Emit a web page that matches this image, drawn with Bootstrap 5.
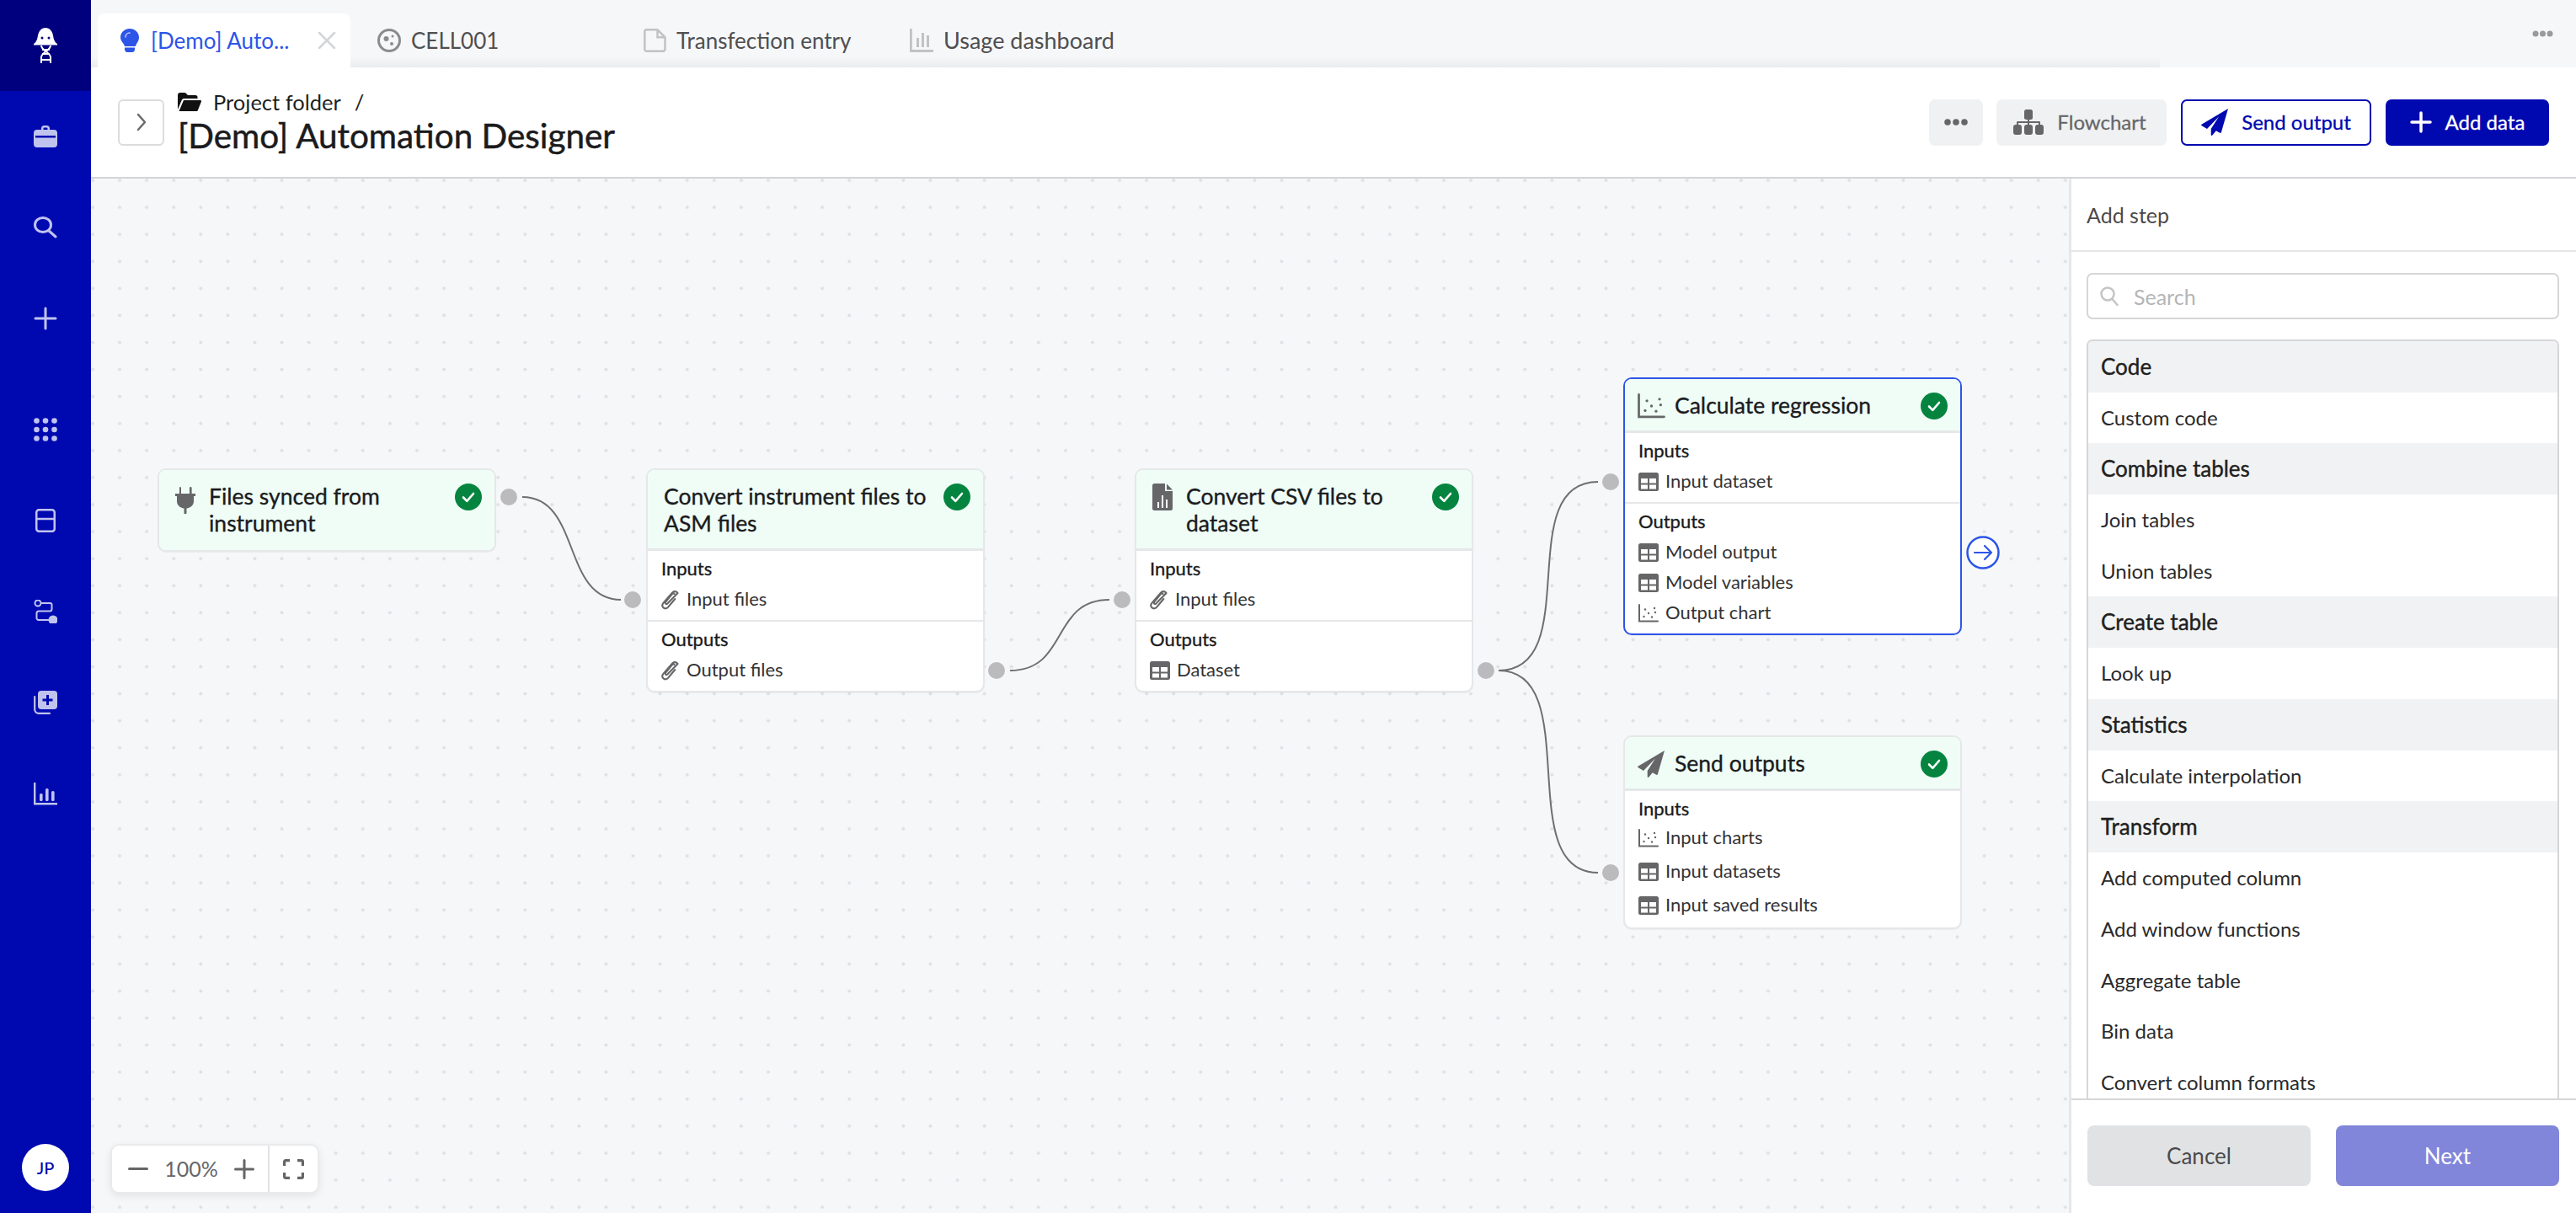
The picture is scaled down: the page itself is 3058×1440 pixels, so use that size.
<!DOCTYPE html>
<html lang="en">
<head>
    <meta charset="UTF-8">
    <meta name="viewport" content="width=device-width, initial-scale=1.0">
    <title>[Demo] Automation Designer</title>
    <link rel="stylesheet" href="https://cdn.jsdelivr.net/npm/bootstrap@5.3.0/dist/css/bootstrap.min.css">
    <style>
        body { font-family: "Lato", "Liberation Sans", sans-serif; color: #1f1f21; background: #fff; overflow: hidden; }
        svg { display: block; flex-shrink: 0; }
        .main-col { min-width: 0; }
        .work-row { min-height: 0; }

        /* left rail */
        .rail { width: 108px; background: #0009b0; color: #c0c3ee; }
        .rail-logo { height: 108px; background: #00007f; color: #fff; }
        .rail-item { height: 108px; color: #c0c3ee; }
        .rail-gap { margin-top: 24px; }
        .rail-avatar { width: 56px; height: 56px; margin-bottom: 26px; background: #fff; color: #0009b0; font-size: 20px; font-weight: 500; }

        /* tab strip */
        .strip { height: 80px; background: #f6f7f9; }
        .strip-tabs { width: 2456px; background: linear-gradient(to bottom, #f6f7f9 85%, #e9ebed 100%); }
        .tab-item { height: 64px; margin-top: 16px; color: #4f4f50; font-size: 26px; white-space: nowrap; }
        .tab-item > svg { margin-right: 12px; }
        .tab-active { width: 300px; margin-left: 8px; padding-left: 27px; background: #fff; color: #2c55e8; border-radius: 8px 8px 0 0; }
        .tab-active > svg:first-child { margin-right: 14px; }
        .tab-cell { margin-left: 32px; width: 316px; }
        .tab-doc { width: 316px; }
        .tab-wide { font-size: 27px; }
        .tab-active > .tab-close { margin: 0 0 0 34px; color: #d4d5d7; }
        .strip-more { margin-right: 27px; color: #9a9a9c; }

        /* page header */
        .page-head { height: 132px; padding: 0 32px; border-bottom: 2px solid #d3d4d6; background: #fff; }
        .toggle-btn { width: 55px; height: 55px; padding: 0; border: 2px solid #dcdcdd; border-radius: 6px; background: #fff; color: #6a6a6c; }
        .crumb { font-size: 25.5px; line-height: 30px; color: #1f1f21; }
        .crumb svg { margin-right: 14px; }
        .page-title { font-size: 40.4px; line-height: 46px; font-weight: 400; -webkit-text-stroke: .5px; margin: 2px 0 0; color: #1b1b1d; }
        .head-btn { height: 55px; padding: 0; font-size: 24px; border-radius: 7px; border-width: 2px; -webkit-text-stroke: .3px; }
        .head-more { width: 64px; }
        .head-flow { width: 202px; margin-left: 16px; padding-right: 4px; }
        .head-send { width: 226px; margin-left: 17px; }
        .head-add { width: 194px; margin-left: 17px; }
        .btn-soft { background: #f0f1f2; border-color: #f0f1f2; color: #666668; }
        .btn-line { background: #fff; border-color: #0009b0; color: #0009b0; }
        .btn-solid { background: #0009b0; border-color: #0009b0; color: #fff; }

        /* canvas */
        .canvas-area { background: #f6f7f9; }
        .canvas-layer { position: absolute; inset: 0; width: 100%; height: 100%; }
        .flow-node { position: absolute; width: 402px; border: 2px solid #e5e7e9; border-radius: 10px; background: #fff; overflow: hidden; box-shadow: 0 1px 1px rgba(0,0,0,.05); }
        .flow-node.is-selected { border-color: #2c55e8; }
        .node-a { left: 79px; top: 344px; }
        .node-b { left: 659px; top: 344px; }
        .node-c { left: 1239px; top: 344px; }
        .node-d { left: 1819px; top: 236px; }
        .node-e { left: 1819px; top: 661px; }
        .node-top { padding: 16px 16px 13px 19px; background: #effdf6; border-bottom: 3px solid #e5e7e9; font-size: 26.5px; line-height: 32px; font-weight: 400; -webkit-text-stroke: .35px; color: #1b1b1d; }
        .node-a .node-top { padding-bottom: 15px; border-bottom: 0; }
        .node-d .node-top, .node-e .node-top { padding-left: 15px; }
        .node-top .node-name { flex: 1; margin: -1px 0 1px; }
        .node-icon { color: #666668; margin-right: 16px; }
        .node-d .node-icon { margin-right: 11px; }
        .node-e .node-icon { margin-right: 12px; }
        .node-check { margin-left: 8px; margin-right: -1px; }
        .node-part { padding: 8px 16px 6px; border-bottom: 2px solid #e5e7e9; }
        .node-part:last-child { border-bottom: 0; }
        .part-name { font-size: 22px; line-height: 26px; font-weight: 400; -webkit-text-stroke: .35px; margin-bottom: 6px; color: #1b1b1d; }
        .part-row { height: 36px; font-size: 22px; color: #333335; gap: 8px; }
        .part-row span { margin-top: -4px; }
        .part-row svg { color: #666668; }
        .part-row .clip-icon { margin-right: 1px; }
        .node-e .part-name { margin-bottom: 2px; }
        .node-e .part-row { height: 40px; }

        .zoom-bar { position: absolute; left: 23px; top: 1146px; width: 248px; height: 59px; background: #fff; border: 2px solid #e9eaec; border-radius: 10px; box-shadow: 0 3px 10px rgba(0,0,0,.08); color: #666668; font-size: 25px; }
        .zoom-main { width: 187px; padding: 0 16px 0 19px; border-right: 2px solid #e2e3e5; }
        .zoom-fit { flex: 1; }

        /* add step panel */
        .step-panel { width: 602px; border-left: 3px solid #e6e7ea; background: #fff; }
        .step-head { height: 87px; padding: 2px 18px 0; border-bottom: 2px solid #e6e6e8; font-size: 25px; color: #4a4a4c; }
        .step-search { margin: 25px 20px 24px 18px; }
        .step-search .form-control { height: 55px; padding-left: 54px; border: 2px solid #d6d6d8; border-radius: 7px; font-size: 25px; }
        .step-search .form-control::placeholder { color: #b5b5b7; }
        .step-search svg { position: absolute; left: 16px; top: 16px; color: #c4c4c6; }
        .step-list { margin: 0 20px 0 18px; border: 2px solid #d6d6d8; border-bottom: 0; border-radius: 7px 7px 0 0; overflow: hidden; min-height: 0; }
        .step-list .list-group-item { height: 60.7px; padding: 0 15px; display: flex; align-items: center; border: 0; border-radius: 0; font-size: 24px; color: #2a2a2c; flex-shrink: 0; }
        .step-list .step-group { background: #f1f2f3; font-size: 26px; -webkit-text-stroke: .4px; color: #1f1f21; }
        .step-foot { height: 136px; padding: 30px 20px 32px 19px; border-top: 2px solid #d6d6d8; gap: 30px; }
        .step-foot .btn { flex: 1; height: 72px; border: 0; border-radius: 8px; font-size: 26px; }
        .btn-cancel { background: #e1e2e4; color: #4a4a4c; }
        .btn-next, .btn-next:disabled { background: #8286da; color: #fff; opacity: 1; }
    </style>
</head>
<body>

    <svg width="0" height="0" class="position-absolute">
        <defs>
            <symbol id="i-table" viewBox="0 0 24 22"><rect width="24" height="22" rx="2.5" fill="currentColor"/><rect x="3" y="7" width="8" height="5.5" fill="#fff"/><rect x="13" y="7" width="8" height="5.5" fill="#fff"/><rect x="3" y="14.5" width="8" height="5" fill="#fff"/><rect x="13" y="14.5" width="8" height="5" fill="#fff"/></symbol>
            <symbol id="i-clip" viewBox="0 0 22 24"><path d="M20 3c-2-2-4.600-1.600-6.400.4L2.900 15.500c-1.800 2.200-2 4.700-.4 6.300 1.800 1.800 4.300 1.200 6.100-.8l8.500-10M16.200 4.600c-.9-.9-2-.4-3 .8L6 14c-1 1.400-1 2.400-.4 3 .8.600 1.800.2 2.800-1L19 5.200C20.400 3.500 21 4 20 3" fill="none" stroke="currentColor" stroke-width="2.200" stroke-linecap="round" stroke-linejoin="round"/></symbol>
            <symbol id="i-scatter" viewBox="0 0 24 22"><path d="M1 1v19.400h22" fill="none" stroke="currentColor" stroke-width="2" stroke-linecap="round"/><g fill="currentColor"><circle cx="6.500" cy="15" r="1.200"/><circle cx="8" cy="6.500" r="1.200"/><circle cx="12" cy="11" r="1.200"/><circle cx="16" cy="15.500" r="1.200"/><circle cx="19" cy="5" r="1.200"/><circle cx="20" cy="10" r="1.200"/></g></symbol>
            <symbol id="i-plane" viewBox="0 0 32 32"><path d="M32 0 .8 18.500c-.9.600-.9 1.300 0 1.800L7 24 21 9.500 11.700 24v7c0 1 1 1.300 1.700.6l4.300-5.300 4.600 2.500c.8.400 1.400 0 1.600-.8z" fill="currentColor"/></symbol>
            <symbol id="i-plug" viewBox="0 0 24 32"><path d="M5.500 0a1.300 1.300 0 0 1 1.500 1.300V8H5V1zM17 1.300a1.300 1.300 0 0 1 2.600 0V8H17z M0 8h24v3h-2v6c0 4.500-3.500 8-8.500 8.500V31a1.500 1.500 0 0 1-3 0v-5.500C5.500 25 2 21.500 2 17v-6H0z" fill="currentColor"/></symbol>
            <symbol id="i-filechart" viewBox="0 0 24 32"><path d="M2.500 0H15v9h9v20.500a2.500 2.500 0 0 1-2.500 2.500h-19A2.500 2.500 0 0 1 0 29.500v-27A2.500 2.500 0 0 1 2.500 0zM17 .5l7 7h-7z" fill="currentColor"/><g fill="#fff"><rect x="6" y="22" width="2" height="7"/><rect x="11" y="14" width="2" height="15"/><rect x="16" y="19" width="2" height="10"/></g></symbol>
            <symbol id="i-sitemap" viewBox="0 0 36 30"><g fill="currentColor"><rect x="13" y="0" width="10" height="12" rx="2.500"/><rect x="0" y="18" width="10" height="12" rx="3"/><rect x="13" y="18" width="10" height="12" rx="3"/><rect x="26" y="18" width="10" height="12" rx="3"/><path d="M17 11h2v3h12a1 1 0 0 1 1 1v4h-2v-3H19v3h-2v-3H6v3H4v-4a1 1 0 0 1 1-1h12z"/></g></symbol>
            <symbol id="i-check" viewBox="0 0 32 32"><circle cx="16" cy="16" r="16" fill="#05843f"/><path d="M10 16.500l4.300 4.300 7.700-8.800" fill="none" stroke="#fff" stroke-width="2.600" stroke-linecap="round" stroke-linejoin="round"/></symbol>
        </defs>
    </svg>

    <div class="d-flex vh-100">
        <aside class="rail d-flex flex-column align-items-center flex-shrink-0">
            <div class="rail-logo w-100 d-flex align-items-center justify-content-center">
                <svg width="28" height="42" viewBox="0 0 28 42" fill="none"><path d="M14 0c5 0 8 4 9 9 .6 4 1.600 8 5 10v1.500H0V19c3.400-2 4.400-6 5-10 1-5 4-9 9-9z" fill="#fff"/><circle cx="10" cy="12" r="1.500" fill="#00007f"/><circle cx="18" cy="12" r="1.500" fill="#00007f"/><path d="M20 21c0 6-11 8-11 14 0 3 0 5 0 7M9 21c0 6 11 8 11 14 0 3 0 5 0 7M10 26h9M10 31h9M10 38h9" stroke="#fff" stroke-width="2"/></svg>
            </div>
            <a class="rail-item w-100 d-flex align-items-center justify-content-center" href="#"><svg width="28" height="26" viewBox="0 0 28 26"><path d="M9 5V3.500A3.500 3.500 0 0 1 12.500 0h3A3.500 3.500 0 0 1 19 3.500V5h5a4 4 0 0 1 4 4v13a4 4 0 0 1-4 4H4a4 4 0 0 1-4-4V9a4 4 0 0 1 4-4zm2.500 0h5V3.500a1 1 0 0 0-1-1h-3a1 1 0 0 0-1 1z" fill="currentColor"/><rect x="2" y="12" width="24" height="2.500" fill="#0009b0"/></svg></a>
            <a class="rail-item w-100 d-flex align-items-center justify-content-center" href="#"><svg width="28" height="26" viewBox="0 0 28 26" fill="none" stroke="currentColor" stroke-width="3"><ellipse cx="11" cy="10" rx="9.500" ry="8.500"/><path d="M18 17l8 7" stroke-linecap="round"/></svg></a>
            <a class="rail-item w-100 d-flex align-items-center justify-content-center" href="#"><svg width="28" height="28" viewBox="0 0 28 28" stroke="currentColor" stroke-width="3" stroke-linecap="round"><path d="M14 2v24M2 14h24"/></svg></a>
            <a class="rail-item rail-gap w-100 d-flex align-items-center justify-content-center" href="#"><svg width="28" height="28" viewBox="0 0 28 28" fill="currentColor"><circle cx="3.500" cy="3.500" r="3.300"/><circle cx="14" cy="3.500" r="3.300"/><circle cx="24.500" cy="3.500" r="3.300"/><circle cx="3.500" cy="14" r="3.300"/><circle cx="14" cy="14" r="3.300"/><circle cx="24.500" cy="14" r="3.300"/><circle cx="3.500" cy="24.500" r="3.300"/><circle cx="14" cy="24.500" r="3.300"/><circle cx="24.500" cy="24.500" r="3.300"/></svg></a>
            <a class="rail-item w-100 d-flex align-items-center justify-content-center" href="#"><svg width="24" height="28" viewBox="0 0 24 28" fill="none" stroke="currentColor" stroke-width="2.500"><rect x="1.250" y="1.250" width="21.500" height="25.500" rx="3"/><path d="M1 12h22"/></svg></a>
            <a class="rail-item w-100 d-flex align-items-center justify-content-center" href="#"><svg width="28" height="28" viewBox="0 0 28 28" fill="none" stroke="currentColor" stroke-width="2"><circle cx="5" cy="4" r="3.500"/><path d="M8.500 4h11a2 2 0 0 1 2 2v5a2.500 2.500 0 0 1-2.500 2.500H6a2.500 2.500 0 0 0-2.500 2.500v5A2.500 2.500 0 0 0 6 24h12"/><circle cx="23" cy="24" r="4.500" fill="currentColor"/></svg></a>
            <a class="rail-item w-100 d-flex align-items-center justify-content-center" href="#"><svg width="28" height="28" viewBox="0 0 28 28"><rect x="5" y="0" width="23" height="22" rx="4" fill="currentColor"/><path d="M16.500 5v12M10.500 11h12" stroke="#0009b0" stroke-width="3"/><path d="M1.200 7v15a4.800 4.800 0 0 0 4.800 4.800h13" fill="none" stroke="currentColor" stroke-width="2.200" stroke-linecap="round"/></svg></a>
            <a class="rail-item w-100 d-flex align-items-center justify-content-center" href="#"><svg width="28" height="28" viewBox="0 0 28 28" fill="currentColor"><path d="M0 1h2.400v24H28v2.500H0z"/><rect x="7" y="14" width="3.600" height="9" rx="1.500"/><rect x="14" y="8" width="3.600" height="15" rx="1.500"/><rect x="21" y="11" width="3.600" height="12" rx="1.500"/></svg></a>
            <div class="rail-avatar mt-auto rounded-circle d-flex align-items-center justify-content-center">JP</div>
        </aside>

        <main class="main-col flex-grow-1 d-flex flex-column">
            <div class="strip d-flex justify-content-between align-items-center flex-shrink-0">
                <div class="strip-tabs d-flex h-100">
                    <div class="tab-item tab-active d-flex align-items-center">
                        <svg width="22" height="28" viewBox="0 0 22 28" fill="currentColor"><path d="M11 0c6 0 11 4.500 11 10.500 0 4.500-3 6.500-4 10.500H5c-1-4-5-6-5-10.500C0 4.500 5 0 11 0z"/><path d="M5 22.500h12v2c0 2-1.500 3.500-3 3.500H8c-1.500 0-3-1.500-3-3.500z"/><path d="M6 10c0-2.800 2-5 5-5" fill="none" stroke="#fff" stroke-width="1.500" stroke-linecap="round" opacity=".7"/></svg>
                        <span>[Demo] Auto...</span>
                        <svg class="tab-close" width="22" height="20" viewBox="0 0 22 20" stroke="currentColor" stroke-width="2.500" stroke-linecap="round"><path d="M2 1l18 18M20 1L2 19"/></svg>
                    </div>
                    <div class="tab-item tab-cell d-flex align-items-center">
                        <svg width="28" height="28" viewBox="0 0 28 28"><circle cx="14" cy="14" r="12.500" fill="none" stroke="#8b8b8d" stroke-width="3"/><circle cx="10.500" cy="12" r="3" fill="#8b8b8d"/><circle cx="17" cy="18" r="2" fill="#8b8b8d"/><circle cx="18" cy="9" r="1.500" fill="#8b8b8d"/></svg>
                        <span>CELL001</span>
                    </div>
                    <div class="tab-item tab-doc d-flex align-items-center">
                        <svg width="27" height="28" viewBox="0 0 27 28" fill="none" stroke="#c2c2c4" stroke-width="2.500"><path d="M3.500 1.300h13l9 9v14a2.500 2.500 0 0 1-2.500 2.500H3.500A2.300 2.300 0 0 1 1.300 24.300v-21A2.300 2.300 0 0 1 3.500 1.300zM16.500 1.300v9h9"/></svg>
                        <span>Transfection entry</span>
                    </div>
                    <div class="tab-item d-flex align-items-center">
                        <svg width="28" height="28" viewBox="0 0 28 28" fill="#c2c2c4"><path d="M0 0h2.800v25H28v3H0z"/><rect x="8" y="11" width="3" height="11"/><rect x="14" y="5" width="3" height="17"/><rect x="20" y="8" width="3" height="14"/></svg>
                        <span class="tab-wide">Usage dashboard</span>
                    </div>
                </div>
                <svg class="strip-more" width="25" height="8" viewBox="0 0 25 8" fill="currentColor"><circle cx="4" cy="4" r="3.500"/><circle cx="12.500" cy="4" r="3.500"/><circle cx="21" cy="4" r="3.500"/></svg>
            </div>

            <header class="page-head d-flex align-items-center flex-shrink-0">
                <button class="toggle-btn btn d-flex align-items-center justify-content-center" type="button"><svg width="12" height="22" viewBox="0 0 12 22" fill="none" stroke="currentColor" stroke-width="2.500" stroke-linecap="round" stroke-linejoin="round"><path d="M2 2l8 9-8 9"/></svg></button>
                <div class="ms-3">
                    <div class="crumb d-flex align-items-center">
                        <svg width="28" height="22" viewBox="0 0 28 22" fill="#111"><path d="M0 3a3 3 0 0 1 3-3h6l3 3h9a2.500 2.500 0 0 1 2.500 2.500V7H7.500a3 3 0 0 0-2.800 2L0 20z"/><path d="M7 9h20c.8 0 1.200.7 1 1.400l-4 10c-.3.900-1 1.600-2 1.600H1.500z"/></svg>
                        <span>Project folder</span><span class="ms-3">/</span>
                    </div>
                    <h1 class="page-title">[Demo] Automation Designer</h1>
                </div>
                <div class="ms-auto d-flex">
                    <button class="btn head-btn head-more btn-soft d-flex align-items-center justify-content-center" type="button"><svg width="28" height="8" viewBox="0 0 28 8" fill="currentColor"><circle cx="4" cy="4" r="3.800"/><circle cx="14" cy="4" r="3.800"/><circle cx="24" cy="4" r="3.800"/></svg></button>
                    <button class="btn head-btn head-flow btn-soft d-flex align-items-center justify-content-center gap-3" type="button"><svg width="36" height="30"><use href="#i-sitemap"/></svg>Flowchart</button>
                    <button class="btn head-btn head-send btn-line d-flex align-items-center justify-content-center gap-3" type="button"><svg width="32" height="32"><use href="#i-plane"/></svg>Send output</button>
                    <button class="btn head-btn head-add btn-solid d-flex align-items-center justify-content-center gap-3" type="button"><svg width="26" height="26" viewBox="0 0 26 26" stroke="currentColor" stroke-width="3.500" stroke-linecap="round"><path d="M13 2v22M2 13h22"/></svg>Add data</button>
                </div>
            </header>

            <div class="work-row d-flex flex-grow-1">
                <section class="canvas-area flex-grow-1 position-relative overflow-hidden">
                    <svg class="canvas-layer">
                        <defs>
                            <pattern id="dot-grid" x="-14" y="-14" width="32.08" height="32.08" patternUnits="userSpaceOnUse"><circle cx="16" cy="16" r="2" fill="#dfe0e3"/></pattern>
                        </defs>
                        <rect width="100%" height="100%" fill="url(#dot-grid)"/>
                        <g fill="none" stroke="#6f6f71" stroke-width="2">
                            <path d="M512 378C582 378 559 500 629 500"/>
                            <path d="M1091 584C1161 584 1139 500 1209 500"/>
                            <path d="M1671 584C1774 584 1686 360 1789 360"/>
                            <path d="M1671 584C1774 584 1686 824 1789 824"/>
                        </g>
                        <g fill="#bbbbbd">
                            <circle cx="496" cy="378" r="10"/>
                            <circle cx="643" cy="500" r="10"/>
                            <circle cx="1075" cy="584" r="10"/>
                            <circle cx="1224" cy="500" r="10"/>
                            <circle cx="1656" cy="584" r="10"/>
                            <circle cx="1804" cy="360" r="10"/>
                            <circle cx="1804" cy="824" r="10"/>
                        </g>
                        <circle cx="2246" cy="444" r="18.500" fill="#fff" stroke="#2c55e8" stroke-width="2.500"/>
                        <path d="M2236 444h20M2248 436l8 8-8 8" fill="none" stroke="#2c55e8" stroke-width="2.200" stroke-linecap="round" stroke-linejoin="round"/>
                    </svg>

                    <div class="flow-node node-a">
                        <div class="node-top d-flex">
                            <svg class="node-icon mt-1" width="24" height="32"><use href="#i-plug"/></svg>
                            <div class="node-name">Files synced from instrument</div>
                            <svg class="node-check" width="32" height="32"><use href="#i-check"/></svg>
                        </div>
                    </div>

                    <div class="flow-node node-b">
                        <div class="node-top d-flex">
                            <div class="node-name">Convert instrument files to ASM files</div>
                            <svg class="node-check" width="32" height="32"><use href="#i-check"/></svg>
                        </div>
                        <div class="node-part">
                            <div class="part-name">Inputs</div>
                            <div class="part-row d-flex align-items-center"><svg class="clip-icon" width="21" height="24"><use href="#i-clip"/></svg><span>Input files</span></div>
                        </div>
                        <div class="node-part">
                            <div class="part-name">Outputs</div>
                            <div class="part-row d-flex align-items-center"><svg class="clip-icon" width="21" height="24"><use href="#i-clip"/></svg><span>Output files</span></div>
                        </div>
                    </div>

                    <div class="flow-node node-c">
                        <div class="node-top d-flex">
                            <svg class="node-icon" width="24" height="32"><use href="#i-filechart"/></svg>
                            <div class="node-name">Convert CSV files to dataset</div>
                            <svg class="node-check" width="32" height="32"><use href="#i-check"/></svg>
                        </div>
                        <div class="node-part">
                            <div class="part-name">Inputs</div>
                            <div class="part-row d-flex align-items-center"><svg class="clip-icon" width="21" height="24"><use href="#i-clip"/></svg><span>Input files</span></div>
                        </div>
                        <div class="node-part">
                            <div class="part-name">Outputs</div>
                            <div class="part-row d-flex align-items-center"><svg width="24" height="22"><use href="#i-table"/></svg><span>Dataset</span></div>
                        </div>
                    </div>

                    <div class="flow-node node-d is-selected">
                        <div class="node-top d-flex align-items-center">
                            <svg class="node-icon" width="33" height="30"><use href="#i-scatter"/></svg>
                            <div class="node-name">Calculate regression</div>
                            <svg class="node-check" width="32" height="32"><use href="#i-check"/></svg>
                        </div>
                        <div class="node-part">
                            <div class="part-name">Inputs</div>
                            <div class="part-row d-flex align-items-center"><svg width="24" height="22"><use href="#i-table"/></svg><span>Input dataset</span></div>
                        </div>
                        <div class="node-part">
                            <div class="part-name">Outputs</div>
                            <div class="part-row d-flex align-items-center"><svg width="24" height="22"><use href="#i-table"/></svg><span>Model output</span></div>
                            <div class="part-row d-flex align-items-center"><svg width="24" height="22"><use href="#i-table"/></svg><span>Model variables</span></div>
                            <div class="part-row d-flex align-items-center"><svg width="24" height="22"><use href="#i-scatter"/></svg><span>Output chart</span></div>
                        </div>
                    </div>

                    <div class="flow-node node-e">
                        <div class="node-top d-flex align-items-center">
                            <svg class="node-icon" width="32" height="32"><use href="#i-plane"/></svg>
                            <div class="node-name">Send outputs</div>
                            <svg class="node-check" width="32" height="32"><use href="#i-check"/></svg>
                        </div>
                        <div class="node-part">
                            <div class="part-name">Inputs</div>
                            <div class="part-row d-flex align-items-center"><svg width="24" height="22"><use href="#i-scatter"/></svg><span>Input charts</span></div>
                            <div class="part-row d-flex align-items-center"><svg width="24" height="22"><use href="#i-table"/></svg><span>Input datasets</span></div>
                            <div class="part-row d-flex align-items-center"><svg width="24" height="22"><use href="#i-table"/></svg><span>Input saved results</span></div>
                        </div>
                    </div>

                    <div class="zoom-bar d-flex align-items-stretch">
                        <div class="zoom-main d-flex align-items-center justify-content-between">
                            <svg width="24" height="3" viewBox="0 0 24 3" fill="currentColor"><rect width="24" height="3" rx="1.500"/></svg>
                            <span>100%</span>
                            <svg width="24" height="24" viewBox="0 0 24 24" stroke="currentColor" stroke-width="3" stroke-linecap="round"><path d="M12 1.500v21M1.500 12h21"/></svg>
                        </div>
                        <div class="zoom-fit d-flex align-items-center justify-content-center">
                            <svg width="25" height="24" viewBox="0 0 25 24" fill="none" stroke="currentColor" stroke-width="3.200"><path d="M1.600 8V3a1.400 1.400 0 0 1 1.400-1.400h5M17 1.600h5a1.400 1.400 0 0 1 1.400 1.400v5M23.400 16v5a1.400 1.400 0 0 1-1.400 1.400h-5M8 22.400H3A1.400 1.400 0 0 1 1.600 21v-5"/></svg>
                        </div>
                    </div>
                </section>

                <aside class="step-panel d-flex flex-column flex-shrink-0">
                    <div class="step-head d-flex align-items-center flex-shrink-0">Add step</div>
                    <div class="step-search position-relative flex-shrink-0">
                        <svg width="22" height="23" viewBox="0 0 22 23" fill="none" stroke="currentColor" stroke-width="2.500"><circle cx="9" cy="9" r="7.500"/><path d="M14.500 15l6 7" stroke-linecap="round"/></svg>
                        <input class="form-control" type="text" placeholder="Search">
                    </div>
                    <div class="step-list list-group flex-grow-1">
                        <div class="list-group-item step-group">Code</div>
                        <div class="list-group-item">Custom code</div>
                        <div class="list-group-item step-group">Combine tables</div>
                        <div class="list-group-item">Join tables</div>
                        <div class="list-group-item">Union tables</div>
                        <div class="list-group-item step-group">Create table</div>
                        <div class="list-group-item">Look up</div>
                        <div class="list-group-item step-group">Statistics</div>
                        <div class="list-group-item">Calculate interpolation</div>
                        <div class="list-group-item step-group">Transform</div>
                        <div class="list-group-item">Add computed column</div>
                        <div class="list-group-item">Add window functions</div>
                        <div class="list-group-item">Aggregate table</div>
                        <div class="list-group-item">Bin data</div>
                        <div class="list-group-item">Convert column formats</div>
                    </div>
                    <div class="step-foot d-flex flex-shrink-0">
                        <button class="btn btn-cancel" type="button">Cancel</button>
                        <button class="btn btn-next" type="button" disabled>Next</button>
                    </div>
                </aside>
            </div>
        </main>
    </div>

    <script src="https://cdn.jsdelivr.net/npm/bootstrap@5.3.0/dist/js/bootstrap.bundle.min.js"></script>
</body>
</html>
